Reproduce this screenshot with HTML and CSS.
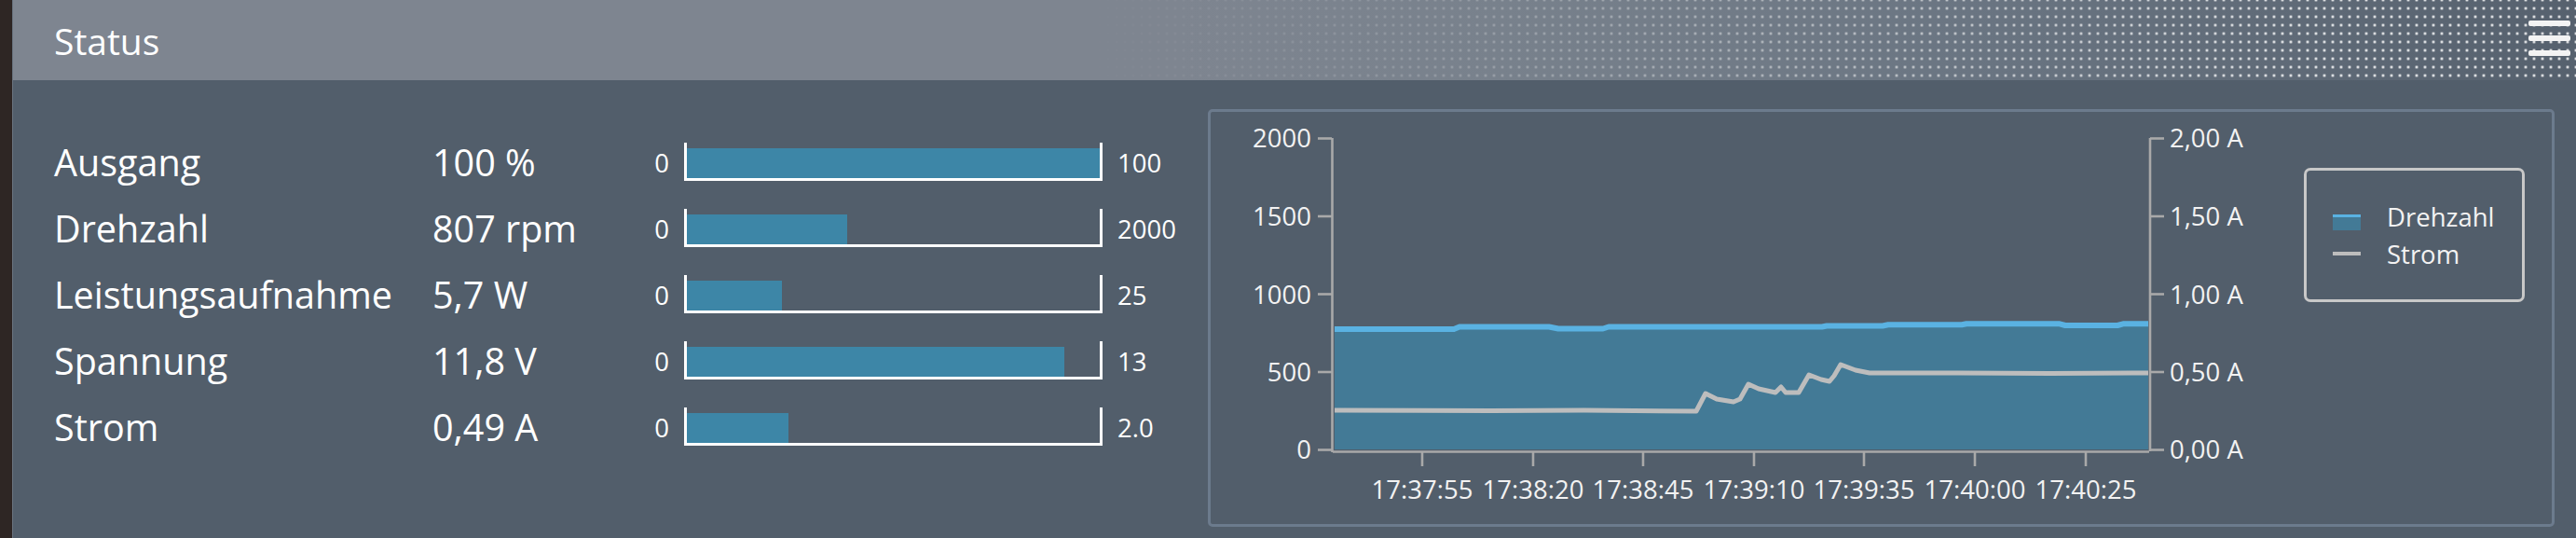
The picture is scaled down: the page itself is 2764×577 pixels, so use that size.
FILE: index.html
```html
<!DOCTYPE html>
<html lang="de">
<head>
<meta charset="utf-8">
<title>Status</title>
<link rel="stylesheet" href="styles.css">
</head>
<body>
<div class="app">
  <div class="edge"></div>
  <div class="main">
    <header class="header">
      <h1 class="title">Status</h1>
      <button class="menu" aria-label="Menü"><span></span><span></span><span></span></button>
    </header>
    <section class="content">
      <div class="stats">
        <div class="row">
          <span class="label">Ausgang</span><span class="value">100 %</span>
          <span class="min">0</span><div class="bar"><div class="fill" style="width:100%"></div></div><span class="max">100</span>
        </div>
        <div class="row">
          <span class="label">Drehzahl</span><span class="value">807 rpm</span>
          <span class="min">0</span><div class="bar"><div class="fill" style="width:38.8%"></div></div><span class="max">2000</span>
        </div>
        <div class="row">
          <span class="label">Leistungsaufnahme</span><span class="value">5,7 W</span>
          <span class="min">0</span><div class="bar"><div class="fill" style="width:23.1%"></div></div><span class="max">25</span>
        </div>
        <div class="row">
          <span class="label">Spannung</span><span class="value">11,8 V</span>
          <span class="min">0</span><div class="bar"><div class="fill" style="width:91.4%"></div></div><span class="max">13</span>
        </div>
        <div class="row">
          <span class="label">Strom</span><span class="value">0,49 A</span>
          <span class="min">0</span><div class="bar"><div class="fill" style="width:24.5%"></div></div><span class="max">2.0</span>
        </div>
      </div>
      <div class="panel">
        <svg class="chart" width="1141" height="442" viewBox="1299 120 1141 442" xmlns="http://www.w3.org/2000/svg">
          <polygon class="area" points="1432,482 1432,353 1560,353 1566,350.5 1662,350.5 1672,352.5 1720,352.5 1726,350.5 1955,350.5 1960,349.5 2020,349.5 2026,348.3 2105,348.3 2110,347.3 2210,347.3 2216,349 2272,349 2278,347.3 2305,347.3 2305,482"/>
          <polyline class="area-line" points="1432,353 1560,353 1566,350.5 1662,350.5 1672,352.5 1720,352.5 1726,350.5 1955,350.5 1960,349.5 2020,349.5 2026,348.3 2105,348.3 2110,347.3 2210,347.3 2216,349 2272,349 2278,347.3 2305,347.3"/>
          <polyline class="strom" points="1432,440 1600,440.5 1700,440 1820,441 1830,422 1842,428 1860,431 1867,428 1876,412 1887,417 1905,421 1911,415 1916,421 1930,421 1941,402 1954,407 1963,409 1968,403 1975,391 1991,397 2006,400 2100,400 2200,400.5 2305,400"/>

          <g class="axis">
            <line x1="1429.5" y1="148" x2="1429.5" y2="485"/>
            <line x1="1414" y1="148.5" x2="1429" y2="148.5"/>
            <line x1="1414" y1="232" x2="1429" y2="232"/>
            <line x1="1414" y1="315.5" x2="1429" y2="315.5"/>
            <line x1="1414" y1="399" x2="1429" y2="399"/>
            <line x1="1414" y1="482.5" x2="1429" y2="482.5"/>

            <line x1="1430" y1="484.5" x2="2306" y2="484.5"/>
            <line x1="1526" y1="484" x2="1526" y2="500"/>
            <line x1="1645" y1="484" x2="1645" y2="500"/>
            <line x1="1763" y1="484" x2="1763" y2="500"/>
            <line x1="1882" y1="484" x2="1882" y2="500"/>
            <line x1="2000" y1="484" x2="2000" y2="500"/>
            <line x1="2119" y1="484" x2="2119" y2="500"/>
            <line x1="2238" y1="484" x2="2238" y2="500"/>

            <line x1="2307" y1="148" x2="2307" y2="484"/>
            <line x1="2307" y1="148.5" x2="2322" y2="148.5"/>
            <line x1="2307" y1="232" x2="2322" y2="232"/>
            <line x1="2307" y1="315.5" x2="2322" y2="315.5"/>
            <line x1="2307" y1="399" x2="2322" y2="399"/>
            <line x1="2307" y1="482.5" x2="2322" y2="482.5"/>
          </g>

          <g class="tick-label left">
            <text x="1407" y="158">2000</text>
            <text x="1407" y="242">1500</text>
            <text x="1407" y="325.5">1000</text>
            <text x="1407" y="409">500</text>
            <text x="1407" y="492">0</text>
          </g>
          <g class="tick-label right">
            <text x="2328" y="158">2,00 A</text>
            <text x="2328" y="242">1,50 A</text>
            <text x="2328" y="325.5">1,00 A</text>
            <text x="2328" y="409">0,50 A</text>
            <text x="2328" y="492">0,00 A</text>
          </g>
          <g class="tick-label bottom">
            <text x="1526" y="535">17:37:55</text>
            <text x="1645" y="535">17:38:20</text>
            <text x="1763" y="535">17:38:45</text>
            <text x="1882" y="535">17:39:10</text>
            <text x="2000" y="535">17:39:35</text>
            <text x="2119" y="535">17:40:00</text>
            <text x="2238" y="535">17:40:25</text>
          </g>
        </svg>
        <div class="legend">
          <div class="legend-item"><span class="swatch swatch-area"></span><span>Drehzahl</span></div>
          <div class="legend-item"><span class="swatch swatch-line"></span><span>Strom</span></div>
        </div>
      </div>
    </section>
  </div>
</div>
</body>
</html>
```

FILE: styles.css
```css
html, body {
  margin: 0;
  padding: 0;
}

body {
  width: 2764px;
  height: 577px;
  overflow: hidden;
  background: #525e6b;
  color: #ffffff;
  font-family: "Open Sans", "Noto Sans", "Liberation Sans", sans-serif;
}

.app {
  display: flex;
  height: 577px;
}

.edge {
  flex: none;
  width: 13px;
  background: #2e2624;
}

.main {
  flex: 1;
  min-width: 0;
  display: flex;
  flex-direction: column;
  border-left: 1px solid rgba(255, 255, 255, 0.14);
}

/* Header */
.header {
  flex: none;
  position: relative;
  height: 86px;
  box-sizing: border-box;
  padding: 0 6px 0 44px;
  display: flex;
  align-items: center;
  justify-content: space-between;
  background: linear-gradient(to right, #7e8590 0px, #7e8590 1250px, #78818c 1600px, #6a7582 2100px, #56616e 2750px);
}

.header::before {
  content: "";
  position: absolute;
  inset: 0;
  background-image:
    radial-gradient(circle at 4.5px 4.5px, rgba(255, 255, 255, 0.95) 0.9px, rgba(255, 255, 255, 0.45) 1.4px, rgba(255, 255, 255, 0) 1.9px);
  background-size: 9px 9px;
  background-position: 0.5px -4.5px;
  -webkit-mask-image: linear-gradient(to right, transparent 1150px, rgba(0, 0, 0, 0.25) 1550px, rgba(0, 0, 0, 0.65) 2000px, #000 2450px);
  mask-image: linear-gradient(to right, transparent 1150px, rgba(0, 0, 0, 0.25) 1550px, rgba(0, 0, 0, 0.65) 2000px, #000 2450px);
  pointer-events: none;
}

.title {
  position: relative;
  margin: 0;
  font-size: 39px;
  font-weight: 400;
  line-height: 1;
  color: #ffffff;
}

.menu {
  position: relative;
  width: 45px;
  padding: 0;
  margin: 0 0 4px 0;
  border: 0;
  background: none;
  display: flex;
  flex-direction: column;
  gap: 10px;
}

.menu span {
  display: block;
  height: 6px;
  border-radius: 2px;
  background: #f3f3f3;
}

/* Content */
.content {
  flex: 1;
  min-height: 0;
  display: flex;
  align-items: flex-start;
}

.stats {
  flex: none;
  padding: 53px 0 0 44px;
}

.row {
  display: flex;
  align-items: center;
  height: 71px;
}

.label {
  width: 406px;
  font-size: 39.5px;
  line-height: 71px;
}

.value {
  width: 226px;
  font-size: 39.5px;
  line-height: 71px;
}

.min {
  width: 28px;
  text-align: right;
  font-size: 27.5px;
}

.max {
  font-size: 27.5px;
}

.bar {
  width: 449px;
  height: 41px;
  box-sizing: border-box;
  margin: 0 16px 2px 16px;
  border: 3px solid #ffffff;
  border-top: 0;
}

.fill {
  height: 32px;
  margin-top: 6px;
  background: #3d86a7;
}

/* Chart panel */
.panel {
  flex: none;
  width: 1445px;
  height: 448px;
  box-sizing: border-box;
  margin: 31px 23px 0 auto;
  border: 3px solid #6c7b8d;
  border-radius: 5px;
  display: flex;
  align-items: flex-start;
}

.chart {
  display: block;
  flex: none;
}

.area {
  fill: #437a96;
}

.area-line {
  fill: none;
  stroke: #5ab2e2;
  stroke-width: 6;
  stroke-linejoin: round;
}

.strom {
  fill: none;
  stroke: #bdbdbd;
  stroke-width: 5;
  stroke-linejoin: round;
}

.axis line {
  stroke: #a9a9a9;
  stroke-width: 2.6;
}

.tick-label text {
  fill: #f2f2f2;
  font-size: 27.5px;
  font-family: "Open Sans", "Noto Sans", "Liberation Sans", sans-serif;
}

.tick-label.left text {
  text-anchor: end;
}

.tick-label.right text {
  text-anchor: start;
}

.tick-label.bottom text {
  text-anchor: middle;
}

.legend {
  flex: none;
  width: 237px;
  height: 144px;
  box-sizing: border-box;
  margin: 60px 0 0 32px;
  padding: 30px 0 0 28px;
  border: 3px solid #c8c8c8;
  border-radius: 7px;
}

.legend-item {
  display: flex;
  align-items: flex-start;
  height: 40px;
  font-size: 27.5px;
  line-height: 40px;
  color: #f2f2f2;
}

.swatch {
  flex: none;
  width: 30px;
  margin: 17px 28px 0 0;
}

.swatch-area {
  height: 17px;
  box-sizing: border-box;
  background: #437a96;
  border-top: 3px solid #5ab2e2;
}

.swatch-line {
  height: 4px;
  background: #bdbdbd;
}
```
